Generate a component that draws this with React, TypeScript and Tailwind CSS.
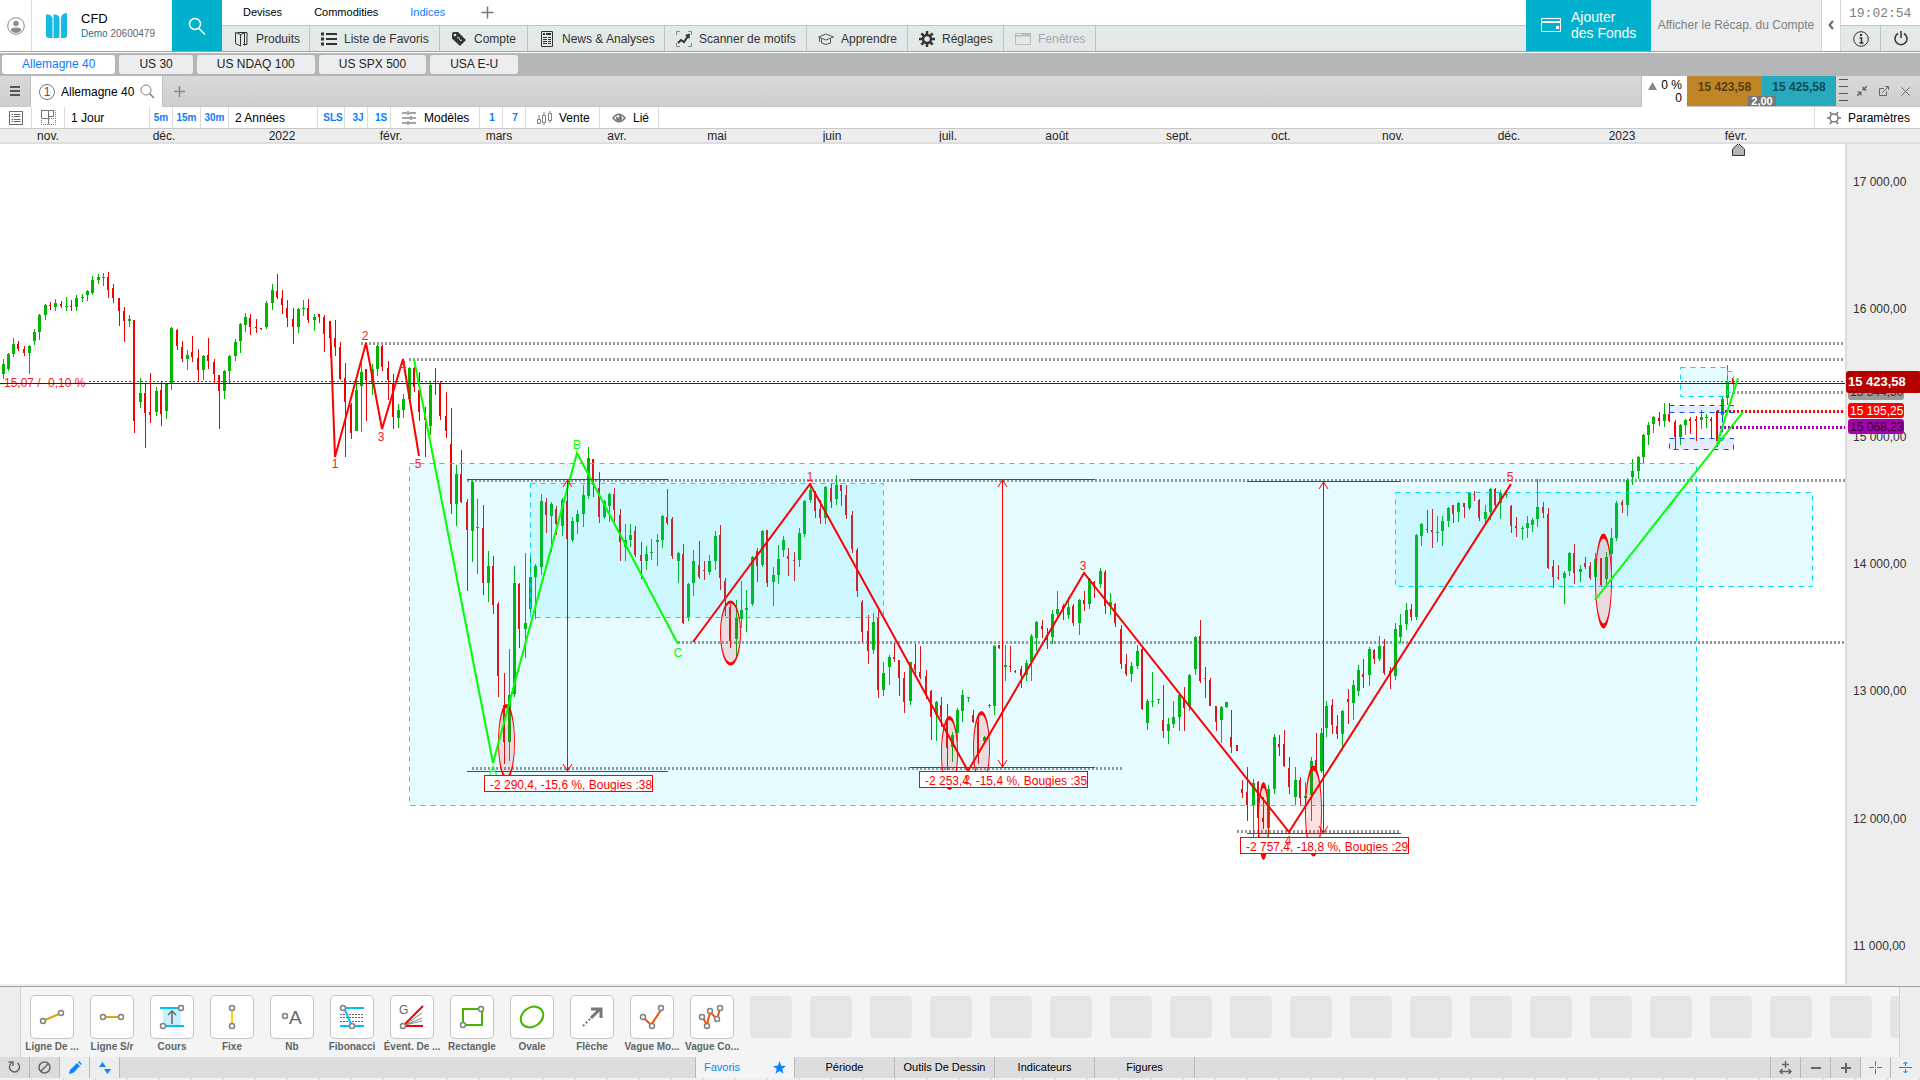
import React from 'react';
import clsx from 'clsx';

type Bar = [x: number, high: number, top: number, bottom: number, low: number];

interface Segment {
  ox: number;
  oy: number;
  up: Bar[];
  down: Bar[];
}

// Daily bars, stored in thirds of a pixel from the origin of each segment
const segments: Segment[] = [
  {
    ox: 0,
    oy: 106,
    up: [
      [10, 328, 342, 372, 387], [26, 309, 312, 357, 363], [40, 264, 282, 312, 321], [88, 286, 288, 309, 372],
      [103, 237, 246, 273, 285], [118, 192, 195, 246, 270], [136, 162, 165, 195, 210], [166, 147, 159, 171, 183],
      [199, 141, 168, 171, 183], [229, 135, 144, 171, 183], [247, 132, 141, 144, 156], [262, 120, 123, 135, 153],
      [277, 78, 90, 129, 135], [295, 72, 81, 90, 102], [310, 69, 81, 84, 108], [388, 195, 207, 213, 231],
      [421, 384, 429, 456, 474], [469, 411, 423, 486, 498], [499, 399, 402, 483, 507], [514, 231, 234, 402, 420],
      [562, 300, 315, 327, 360], [610, 315, 318, 360, 390], [673, 360, 363, 423, 447], [688, 315, 318, 363, 400],
      [706, 267, 276, 318, 333], [721, 219, 222, 273, 309], [736, 189, 201, 225, 246], [799, 153, 159, 231, 237],
      [817, 102, 120, 159, 180], [895, 174, 177, 231, 249], [910, 150, 174, 177, 198], [943, 192, 201, 210, 243],
      [1069, 380, 420, 543, 543], [1084, 340, 366, 408, 546], [1117, 342, 357, 400, 435], [1132, 285, 288, 357, 378],
      [1195, 462, 480, 504, 534], [1210, 432, 447, 480, 504], [1228, 350, 354, 447, 447], [1291, 395, 405, 528, 555],
    ],
    down: [
      [55, 273, 282, 297, 303], [73, 288, 297, 309, 318], [151, 156, 165, 168, 180], [184, 153, 162, 168, 174],
      [214, 150, 168, 171, 183], [325, 66, 81, 120, 144], [340, 102, 115, 144, 159], [358, 144, 144, 183, 228],
      [373, 171, 183, 213, 276], [403, 210, 210, 513, 549], [436, 400, 429, 489, 594], [451, 369, 486, 495, 519],
      [484, 393, 420, 492, 528], [532, 237, 240, 288, 300], [547, 273, 291, 327, 336], [577, 258, 306, 321, 336],
      [595, 297, 324, 360, 396], [625, 264, 315, 333, 357], [643, 327, 336, 372, 399], [658, 375, 375, 423, 537],
      [751, 192, 204, 231, 255], [769, 207, 231, 234, 249], [784, 234, 234, 237, 240], [832, 72, 123, 141, 147],
      [847, 120, 144, 165, 192], [862, 150, 174, 204, 231], [880, 174, 207, 231, 282], [925, 147, 174, 210, 219],
      [958, 192, 192, 201, 219], [973, 195, 201, 252, 306], [991, 213, 213, 265, 320], [1006, 210, 264, 290, 318],
      [1021, 276, 290, 387, 390], [1036, 339, 384, 456, 621], [1054, 460, 465, 549, 567], [1099, 357, 357, 390, 513],
      [1147, 285, 288, 351, 363], [1165, 333, 354, 390, 450], [1180, 372, 400, 501, 537], [1243, 350, 354, 411, 426],
      [1258, 366, 420, 485, 513], [1276, 471, 490, 510, 621], [1306, 354, 400, 402, 435], [1321, 393, 402, 498, 510],
      [1339, 426, 498, 543, 564],
    ],
  },
  {
    ox: 400,
    oy: 196,
    up: [
      [169, 375, 402, 492, 558], [217, 420, 425, 573, 666], [233, 477, 561, 564, 702], [265, 633, 678, 729, 786],
      [343, 678, 729, 1062, 1071], [376, 639, 849, 867, 954], [328, 927, 1065, 1206, 1263], [392, 650, 711, 807, 820],
      [406, 672, 678, 711, 837], [424, 462, 483, 681, 705], [454, 486, 492, 528, 636], [487, 474, 480, 558, 588],
      [517, 531, 543, 600, 606], [532, 510, 522, 546, 582], [550, 435, 465, 522, 561], [565, 321, 354, 468, 477],
      [613, 480, 483, 531, 537], [628, 459, 462, 498, 546], [676, 552, 600, 621, 663], [691, 552, 585, 600, 621],
      [739, 618, 642, 663, 690], [754, 597, 636, 639, 660], [772, 582, 600, 606, 678], [787, 525, 528, 600, 624],
      [835, 636, 639, 663, 729], [865, 729, 732, 832, 843], [880, 630, 663, 729, 768], [928, 645, 663, 696, 705],
      [946, 573, 588, 663, 690], [1009, 780, 834, 897, 957], [1024, 723, 810, 837, 864], [1039, 750, 804, 810, 876],
      [1057, 648, 651, 792, 798], [1087, 570, 573, 675, 681], [1120, 681, 705, 726, 798], [1135, 615, 657, 705, 732],
      [1150, 588, 600, 630, 651], [1198, 564, 579, 660, 681], [1213, 480, 483, 582, 591], [1231, 435, 450, 480, 489],
      [1276, 438, 441, 534, 552], [1309, 405, 435, 477, 495], [1420, 819, 846, 930, 942], [1450, 966, 999, 1050, 1068],
      [1468, 945, 951, 981, 1035],
    ],
    down: [
      [153, 204, 312, 492, 522], [184, 330, 402, 486, 489], [202, 477, 486, 570, 753], [250, 495, 564, 729, 765],
      [279, 648, 678, 795, 822], [295, 786, 792, 1008, 1071], [313, 999, 1095, 1206, 1272], [358, 729, 732, 867, 924],
      [439, 474, 486, 525, 579], [469, 498, 507, 552, 585], [502, 420, 483, 597, 600], [580, 357, 357, 435, 471],
      [598, 396, 444, 530, 549], [643, 444, 462, 510, 546], [661, 507, 525, 606, 663], [706, 558, 573, 645, 651],
      [724, 606, 645, 663, 717], [802, 447, 531, 549, 555], [817, 531, 537, 648, 657], [850, 612, 642, 849, 852],
      [898, 603, 675, 711, 717], [913, 663, 690, 693, 720], [961, 555, 585, 714, 750], [976, 714, 723, 780, 828],
      [991, 792, 800, 903, 924], [1072, 624, 633, 678, 726], [1102, 570, 570, 729, 741], [1165, 624, 648, 657, 708],
      [1183, 636, 660, 663, 723], [1246, 453, 453, 513, 534], [1261, 480, 507, 534, 552], [1294, 432, 444, 486, 504],
      [1324, 435, 435, 453, 498], [1339, 435, 465, 525, 537], [1357, 513, 525, 627, 639], [1372, 624, 630, 753, 771],
      [1387, 780, 786, 876, 906], [1405, 825, 873, 933, 972], [1435, 810, 834, 1050, 1074], [1483, 910, 951, 957, 966],
      [1498, 960, 960, 1014, 1067],
    ],
  },
  {
    ox: 860,
    oy: 316,
    up: [
      [151, 606, 606, 723, 735], [229, 723, 726, 765, 843], [277, 816, 825, 861, 906], [292, 744, 750, 819, 846],
      [307, 690, 705, 753, 786], [325, 711, 711, 714, 726], [388, 732, 735, 738, 744], [373, 828, 831, 843, 850],
      [403, 555, 558, 738, 765], [436, 555, 615, 621, 663], [499, 600, 609, 645, 663], [514, 522, 528, 606, 663],
      [529, 483, 486, 534, 573], [577, 450, 462, 531, 552], [592, 393, 447, 462, 470], [625, 411, 441, 465, 477],
      [658, 417, 420, 489, 525], [688, 354, 357, 432, 447], [721, 324, 333, 372, 384], [751, 399, 426, 438, 465],
      [814, 606, 618, 642, 666], [832, 555, 573, 618, 627], [862, 717, 723, 789, 810], [877, 636, 723, 726, 741],
      [895, 717, 717, 720, 732], [925, 774, 792, 813, 852], [940, 723, 771, 792, 804], [958, 702, 705, 771, 813],
      [988, 642, 645, 738, 753], [1006, 528, 531, 627, 645], [1084, 738, 741, 780, 849], [1099, 726, 726, 741, 744],
      [1180, 957, 969, 1036, 1135], [1225, 975, 987, 1104, 1130], [1243, 822, 831, 987, 1002], [1306, 921, 960, 1011, 1035],
    ],
    down: [
      [133, 636, 654, 726, 759], [166, 552, 612, 630, 648], [181, 558, 636, 651, 657], [199, 630, 648, 705, 717],
      [214, 690, 693, 771, 840], [244, 711, 735, 771, 800], [262, 732, 780, 864, 930], [340, 750, 765, 786, 790],
      [355, 765, 785, 880, 912], [418, 555, 555, 564, 567], [451, 558, 618, 621, 636], [466, 630, 633, 636, 639],
      [484, 618, 627, 648, 684], [547, 480, 498, 507, 534], [562, 504, 525, 540, 567], [610, 432, 438, 450, 480],
      [640, 432, 438, 489, 498], [673, 393, 420, 432, 453], [703, 363, 366, 380, 414], [736, 330, 336, 438, 462],
      [766, 429, 432, 489, 501], [784, 495, 507, 612, 627], [799, 582, 612, 642, 648], [847, 558, 567, 747, 750],
      [910, 675, 780, 813, 834], [973, 681, 715, 744, 813], [1021, 480, 528, 663, 669], [1036, 621, 654, 657, 714],
      [1051, 654, 660, 738, 738], [1069, 738, 738, 786, 813], [1114, 750, 831, 861, 879], [1132, 855, 855, 873, 873],
      [1147, 960, 987, 999, 1014], [1162, 921, 996, 1035, 1083], [1195, 963, 966, 1074, 1130], [1210, 1010, 1074, 1086, 1107],
      [1258, 825, 852, 861, 888], [1273, 810, 852, 918, 921], [1288, 891, 924, 981, 1002],
    ],
  },
  {
    ox: 1220,
    oy: 296,
    up: [
      [256, 1025, 1068, 1074, 1090], [274, 951, 963, 1065, 1143], [304, 864, 879, 993, 999], [319, 783, 798, 864, 891],
      [367, 810, 813, 882, 930], [400, 720, 735, 789, 840], [415, 675, 690, 753, 768], [448, 621, 627, 705, 738],
      [478, 588, 618, 657, 663], [526, 549, 567, 708, 720], [541, 522, 555, 591, 609], [559, 489, 510, 552, 570],
      [589, 282, 285, 531, 540], [604, 249, 252, 288, 318], [652, 228, 276, 279, 306], [667, 228, 243, 273, 318],
      [685, 201, 204, 243, 261], [715, 186, 189, 216, 246], [748, 156, 159, 204, 210], [796, 195, 216, 237, 249],
      [811, 144, 147, 216, 240], [841, 150, 159, 189, 237], [859, 155, 162, 165, 174], [907, 258, 264, 267, 300],
      [922, 228, 249, 264, 294], [937, 234, 240, 255, 276], [952, 117, 201, 237, 261], [1033, 393, 399, 414, 492],
      [1048, 336, 339, 393, 408], [1081, 375, 387, 396, 426], [1126, 340, 357, 411, 426], [1159, 336, 351, 417, 440],
      [1174, 264, 294, 342, 390], [1189, 183, 189, 294, 303], [1222, 114, 120, 195, 228], [1237, 57, 93, 111, 135],
      [1255, 48, 51, 93, 117],
    ],
    down: [
      [241, 1011, 1020, 1074, 1098], [289, 879, 960, 990, 993], [337, 777, 795, 855, 882], [352, 825, 858, 882, 897],
      [385, 747, 777, 786, 852], [430, 657, 702, 711, 744], [463, 627, 630, 657, 672], [493, 597, 618, 699, 705],
      [511, 681, 693, 708, 747], [574, 492, 507, 531, 543], [622, 210, 267, 270, 279], [637, 207, 270, 276, 324],
      [700, 195, 195, 222, 249], [733, 189, 189, 201, 234], [763, 153, 162, 165, 183], [778, 177, 180, 234, 243],
      [826, 144, 147, 195, 210], [874, 195, 198, 258, 279], [889, 231, 258, 264, 291], [970, 186, 201, 219, 234],
      [985, 204, 222, 384, 387], [1000, 360, 378, 411, 444], [1015, 375, 411, 414, 420], [1063, 312, 339, 399, 432],
      [1096, 351, 369, 381, 387], [1111, 366, 378, 414, 420], [1144, 354, 354, 435, 438], [1207, 180, 186, 195, 219],
    ],
  },
  {
    ox: 1560,
    oy: 196,
    up: [
      [250, 282, 285, 351, 369], [265, 246, 255, 285, 315], [280, 228, 231, 252, 279], [313, 189, 222, 243, 261],
      [361, 252, 255, 291, 315], [376, 237, 240, 255, 285], [424, 210, 231, 240, 267], [439, 222, 231, 234, 264],
      [487, 171, 177, 225, 237], [502, 75, 125, 174, 195],
    ],
    down: [
      [298, 216, 234, 243, 258], [328, 189, 222, 243, 246], [346, 240, 246, 291, 328], [391, 231, 237, 243, 282],
      [409, 228, 237, 243, 303], [454, 231, 237, 243, 294], [472, 211, 213, 303, 321], [520, 114, 114, 130, 160],
    ],
  },
];

const Candle = ({ bar, ox, oy, up }: { bar: Bar; ox: number; oy: number; up?: boolean }) => {
  const x = ox + Math.floor(bar[0] / 3);
  const [high, top, bottom, low] = bar.slice(1).map(v => oy + Math.round(v / 3));
  return (
    <g fill={up ? '#00b400' : '#f50000'}>
      <rect x={x} y={high} width={1} height={Math.max(1, low - high)} />
      <rect x={x - 1} y={top} width={up ? 3 : 2} height={Math.max(1, bottom - top)} />
    </g>
  );
};

const months: [string, number][] = [
  ['nov.', 48], ['déc.', 164], ['2022', 282], ['févr.', 391], ['mars', 499], ['avr.', 617],
  ['mai', 717], ['juin', 832], ['juil.', 948], ['août', 1057], ['sept.', 1179], ['oct.', 1281],
  ['nov.', 1393], ['déc.', 1509], ['2023', 1622], ['févr.', 1736],
];

const prices: [string, number][] = [
  ['17 000,00', 42], ['16 000,00', 169], ['15 000,00', 297], ['14 000,00', 424],
  ['13 000,00', 551], ['12 000,00', 679], ['11 000,00', 806],
];

const dotted = [
  { y: 199, x1: 361, x2: 1845, color: '#969696' },
  { y: 215, x1: 409, x2: 1845, color: '#969696' },
  { y: 336, x1: 467, x2: 1845, color: '#969696' },
  { y: 498, x1: 678, x2: 1845, color: '#969696' },
  { y: 624, x1: 472, x2: 1122, color: '#969696' },
  { y: 687, x1: 1237, x2: 1401, color: '#969696' },
  { y: 248, x1: 1733, x2: 1845, color: '#969696' },
  { y: 267, x1: 1717, x2: 1845, color: '#ff0000' },
  { y: 283, x1: 1720, x2: 1845, color: '#aa00b4' },
];

const zones = [
  { x: 409, y: 319, w: 1287, h: 342, blue: false },
  { x: 530, y: 339, w: 353, h: 134, blue: false },
  { x: 1395, y: 348, w: 417, h: 94, blue: false },
  { x: 1680, y: 223, w: 47, h: 29, blue: false },
  { x: 1727, y: 227, w: 6, h: 21, blue: false },
  { x: 1669, y: 261, w: 64, h: 7, blue: true },
  { x: 1669, y: 294, w: 64, h: 11, blue: true },
  { x: 1717, y: 268, w: 5, h: 28, blue: true },
];

const ovals = [
  { x: 730, y: 489, rx: 10, ry: 31, s: 3 },
  { x: 506, y: 598, rx: 8, ry: 36, s: 4 },
  { x: 949, y: 609, rx: 8, ry: 35, s: 4 },
  { x: 981, y: 604, rx: 8, ry: 35, s: 4 },
  { x: 1263, y: 677, rx: 5, ry: 36, s: 6 },
  { x: 1313, y: 667, rx: 8, ry: 43, s: 5 },
  { x: 1603, y: 437, rx: 8, ry: 45, s: 5 },
];

const measures = [
  { x1: 467, x2: 668, top: 335, bottom: 627, x: 567, box: 484, boxY: 631, text: '-2 290,4, -15,6 %, Bougies :38' },
  { x1: 910, x2: 1095, top: 335, bottom: 623, x: 1002, box: 919, boxY: 627, text: '-2 253,4, -15,4 %, Bougies :35' },
  { x1: 1247, x2: 1401, top: 337, bottom: 689, x: 1323, box: 1240, boxY: 693, text: '-2 757,4, -18,8 %, Bougies :29' },
];

const waveLabels: [string, number, number][] = [
  ['1', 335, 324], ['2', 365, 196], ['3', 381, 297], ['4', 403, 226], ['5', 418, 324],
  ['1', 810, 337], ['2', 967, 640], ['3', 1083, 426], ['4', 1288, 701], ['5', 1510, 337],
];

const Chart = () => (
  <svg className="block h-full w-full" fontSize={12}>
    {dotted.map(l => (
      <line key={l.y} x1={l.x1} x2={l.x2} y1={l.y + 0.5} y2={l.y + 0.5} stroke={l.color} strokeWidth={3} strokeDasharray="2 2" />
    ))}

    <g shapeRendering="crispEdges">
      {segments.map(s => (
        <g key={s.ox}>
          {s.up.map(b => <Candle key={b[0]} bar={b} ox={s.ox} oy={s.oy} up />)}
          {s.down.map(b => <Candle key={b[0]} bar={b} ox={s.ox} oy={s.oy} />)}
        </g>
      ))}
    </g>

    {zones.map(z => (
      <rect
        key={`${z.x}-${z.y}`}
        x={z.x + 0.5}
        y={z.y + 0.5}
        width={z.w}
        height={z.h}
        fill={z.blue ? '#0040ff' : '#00dcff'}
        fillOpacity={0.1}
        stroke={z.blue ? '#0055ff' : '#00d8ff'}
        strokeDasharray="5 5"
      />
    ))}

    {/* Cours actuel */}
    <line x1={89} x2={1845} y1={237.5} y2={237.5} stroke="#e60000" strokeDasharray="2 2" />
    <line x1={0} x2={1845} y1={239.5} y2={239.5} stroke="#282828" />
    <text x={0} y={243} fill="#ff2020">-15,07 / -0,10 %</text>
    <line x1={0} x2={89} y1={239.5} y2={239.5} stroke="#282828" />

    {ovals.map(o => (
      <g key={o.x} transform={`translate(${o.x + 0.5} ${o.y}) scale(${o.rx / o.ry} 1)`}>
        <circle r={o.ry} fill="#ff0000" fillOpacity={0.12} stroke="#ff0000" strokeWidth={o.s} />
      </g>
    ))}

    {/* Vagues */}
    <g fill="none" strokeWidth={2}>
      <path d="M330 177L335 313L366 199L382 285L403 215L419 312" stroke="#ff0000" />
      <path d="M414 215L493 619L577 309L678 500" stroke="#00ff00" />
      <path d="M693 498L810 340L968 627L1084 429L1289 688L1511 340" stroke="#ff0000" />
      <path d="M1595 456L1743 268M1717 300L1738 234" stroke="#00ff00" />
    </g>

    {measures.map(m => (
      <g key={m.x} stroke="#ff0000" fill="none">
        <path d={`M${m.x1} ${m.top + 0.5}H${m.x2}M${m.x1} ${m.bottom + 0.5}H${m.x2}M${m.x + 0.5} ${m.top}V${m.bottom}`} />
        <path d={`M${m.x - 4} ${m.top + 8}L${m.x + 0.5} ${m.top + 1}L${m.x + 5} ${m.top + 8}M${m.x - 4} ${m.bottom - 7}L${m.x + 0.5} ${m.bottom}L${m.x + 5} ${m.bottom - 7}`} />
        <rect x={m.box + 0.5} y={m.boxY + 0.5} width={168} height={16} fill="#ffffff" />
        <text x={m.box + 6} y={m.boxY + 14} fill="#ff0000" stroke="none">{m.text}</text>
      </g>
    ))}

    <g textAnchor="middle" fill="#ff2020">
      {waveLabels.map(([t, x, y]) => (
        <text key={`${t}-${x}`} x={x} y={y}>{t}</text>
      ))}
    </g>
    <g textAnchor="middle" fill="#00ff00">
      <text x={493} y={631}>A</text>
      <text x={577} y={305}>B</text>
      <text x={678} y={513}>C</text>
    </g>
    <path d="M1732.5 11.5V5L1738.5 -0.5L1744.5 5V11.5Z" fill="#b4b4b4" stroke="#333" />
  </svg>
);

/* ---------- Icons ---------- */

const Icon = ({ w = 16, h = 16, className, children }: { w?: number; h?: number; className?: string; children: React.ReactNode }) => (
  <svg width={w} height={h} viewBox={`0 0 ${w} ${h}`} fill="none" stroke="currentColor" className={clsx('shrink-0', className)} aria-hidden="true">
    {children}
  </svg>
);

const menu = [
  { label: 'Produits', width: 'w-[88px]', icon: <Icon><path d="M4.500 1.500H14V13.500H10" /><path d="M2.500 1.500L7.500 3.500V15L2.500 12.500ZM7.500 3.500L11.500 2V14.500" /></Icon> },
  { label: 'Liste de Favoris', width: 'w-[130px]', icon: <Icon><path d="M5 3H16M5 8H16M5 13H16" strokeWidth="2" /><path d="M0 3H3M0 8H3M0 13H3" strokeWidth="3" /></Icon> },
  { label: 'Compte', width: 'w-[88px]', icon: <Icon><path d="M1 2.500Q1 1 3 1H7L15 9L9 15L1 7.500Z" fill="#333" stroke="none" /><path d="M6 7Q8 5 8.500 8T11 9" stroke="#e3e8e8" /><circle cx="4" cy="4" r="1.300" fill="#e3e8e8" stroke="none" /></Icon> },
  { label: 'News & Analyses', width: 'w-[137px]', icon: <Icon><path d="M2.500 0.500H13.500V15.500H2.500Z" /><path d="M4 3H6M7 3H12" strokeWidth="2" /><path d="M4 6.500H8M9 6.500H12M4 8.500H8M4 10.500H8M4 12.500H8M9 8.500H12M9 10.500H12M9 12.500H12" /></Icon> },
  { label: 'Scanner de motifs', width: 'w-[142px]', icon: <Icon><path d="M0.500 4V0.500H4M12 0.500H15.500V4M0.500 12V15.500H4M12 15.500H15.500V12" stroke="#888" /><path d="M2 12L5 9L8 11L12 5" strokeWidth="2" /><path d="M9 4L14 2.500L13.500 8Z" fill="#333" stroke="none" /></Icon> },
  { label: 'Apprendre', width: 'w-[101px]', icon: <Icon><path d="M0.500 6L8 3L15.500 6L8 9ZM3.500 8V12Q8 15 12.500 12V8M1.500 7V11" stroke="#555" /></Icon> },
  { label: 'Réglages', width: 'w-[96px]', icon: <Icon><circle cx="8" cy="8" r="4" strokeWidth="2.500" /><path d="M8 0V3M8 13V16M0 8H3M13 8H16M2.300 2.300L4.500 4.500M11.500 11.500L13.700 13.700M2.300 13.700L4.500 11.500M11.500 4.500L13.700 2.300" strokeWidth="2.500" /></Icon> },
  { label: 'Fenêtres', width: 'w-[92px]', disabled: true, icon: <Icon><path d="M0.500 2.500H15.500V13.500H0.500Z" stroke="#bbb" /><path d="M0.500 4.500H8V2.500H15V5H0.500Z" fill="#bbb" stroke="#bbb" /></Icon> },
];

const Header = () => (
  <header className="mb-px flex h-[52px] shrink-0 border-b border-[#9a9fb4] bg-white">
    <button aria-label="Profil" className="flex w-8 items-center justify-center border-r border-[#dcdcdc] text-[#8c8c8c]">
      <Icon w={18} h={18}>
        <circle cx="9" cy="9" r="8.300" />
        <circle cx="9" cy="6.500" r="2.700" fill="currentColor" stroke="none" />
        <path d="M3.500 13Q4 10.500 9 10.500T14.500 13Q12.500 16 9 16T3.500 13Z" fill="currentColor" stroke="none" />
      </Icon>
    </button>
    <div className="flex w-[140px] items-center gap-3.5 pl-3.5">
      <svg width="21" height="25" viewBox="0 0 21 25" fill="#14bbe0" aria-hidden="true">
        <path d="M0 1.500C4 1.500 6.500 2.500 6.500 6V25H3Q0 25 0 22ZM7.500 1.500C11 1.500 13.500 2.500 13.500 6V25H7.500ZM21 0V22Q21 25 18 25H15V6C15 2 17 0.500 21 0Z" />
      </svg>
      <div className="pb-0.5">
        <p className="text-[13px] leading-[18px] text-black">CFD</p>
        <p className="text-[10px] leading-3 text-[#666]"><span className="text-[#007d96]">Demo</span> 20600479</p>
      </div>
    </div>
    <button aria-label="Rechercher" className="flex w-[50px] items-center justify-center bg-[#00b0cd] text-white">
      <Icon w={18} h={18}>
        <circle cx="7" cy="7" r="5.500" strokeWidth="1.500" />
        <path d="M11 11.500L17 17.500" strokeWidth="1.500" />
      </Icon>
    </button>
    <div className="flex min-w-0 flex-1 flex-col">
      <nav className="flex h-[25px] items-center gap-8 pl-[21px] text-[11px] text-black">
        <a href="#devises">Devises</a>
        <a href="#commodities">Commodities</a>
        <a href="#indices" className="text-[#0a7cff]">Indices</a>
        <button aria-label="Ajouter un espace" className="ml-1 text-[#777]"><Icon w={13} h={13}><path d="M6.500 0.500V12.500M0.500 6.500H12.500" strokeWidth="1.500" /></Icon></button>
      </nav>
      <div className="flex flex-1 overflow-hidden border-t border-[#bfc4c4] bg-[#e3e8e8]">
        {menu.map(m => (
          <button
            key={m.label}
            disabled={m.disabled}
            className={clsx('flex shrink-0 items-center gap-[7px] border-r border-[#bfc4c4] pl-[11px] text-xs whitespace-nowrap', m.width, m.disabled ? 'text-[#a8a8a8]' : 'text-[#333]')}
          >
            {m.icon}
            {m.label}
          </button>
        ))}
      </div>
    </div>
    <button className="flex w-[125px] items-center gap-[10px] bg-[#00b0cd] pb-0.5 pl-[15px] text-left text-sm leading-4 text-white">
      <Icon w={20} h={14}><path d="M0.500 0.500H19.500V13.500H0.500Z" /><path d="M0 4H20" strokeWidth="2" /><path d="M15 8H18V11H15Z" fill="#fff" stroke="none" /></Icon>
      <span>Ajouter<br />des Fonds</span>
    </button>
    <button className="w-[171px] border-r border-[#d4d4d4] bg-[#ecedef] pb-0.5 text-xs whitespace-nowrap text-[#808080]">Afficher le Récap. du Compte</button>
    <button aria-label="Replier" className="flex w-[19px] items-center justify-center border-r border-[#d4d4d4] pb-0.5 text-[#666]">
      <Icon w={6} h={10}><path d="M5 1L1.500 5L5 9" strokeWidth="2" /></Icon>
    </button>
    <div className="flex w-[79px] flex-col">
      <time className="h-[25px] pl-2 font-['Liberation_Mono',monospace] text-[13px] leading-[27px] text-[#808080]">19:02:54</time>
      <div className="flex flex-1 border-t border-[#bfc4c4] bg-[#e3e8e8] text-[#333]">
        <button aria-label="Informations" className="flex flex-1 items-center justify-center border-r border-[#bfc4c4]">
          <Icon><circle cx="8" cy="8" r="7.300" /><path d="M6.500 7H8.500V12M6.500 12H10.500" strokeWidth="1.500" /><path d="M7 4H9" strokeWidth="2" /></Icon>
        </button>
        <button aria-label="Déconnexion" className="flex flex-1 items-center justify-center">
          <Icon w={14} h={15}><path d="M4 2.500A6 6 0 1 0 10 2.500M7 0V7" strokeWidth="1.500" /></Icon>
        </button>
      </div>
    </div>
  </header>
);

const instruments = ['Allemagne 40', 'US 30', 'US NDAQ 100', 'US SPX 500', 'USA E-U'];

const InstrumentTabs = () => (
  <nav className="flex h-[23px] shrink-0 gap-1 bg-[#b5b6b8] pt-0.5 pl-0.5 text-xs leading-[18px]">
    {instruments.map((name, i) => (
      <button key={name} className={clsx('h-[19px] rounded-[3px] px-5 pb-px', i === 0 ? 'bg-white text-[#0a7cff]' : 'bg-[#ecedef] text-[#222]')}>{name}</button>
    ))}
  </nav>
);

const WindowBar = () => (
  <div className="flex h-[31px] shrink-0 border-b border-[#c8c8c8] bg-linear-to-b from-[#d9d9d9] to-[#cecece] text-xs">
    <button aria-label="Menu" className="flex w-[31px] items-center justify-center border-r border-[#c0c0c0] text-[#555]">
      <Icon w={10} h={12}><path d="M0 2H10M0 6H10M0 10H10" strokeWidth="2" /></Icon>
    </button>
    <div className="-mb-px flex w-[132px] items-center gap-1.5 border-r border-[#c0c0c0] bg-white pl-2">
      <span className="flex size-4 items-center justify-center rounded-full border border-[#777] text-[#555]">1</span>
      <span className="whitespace-nowrap text-black">Allemagne 40</span>
      <button aria-label="Rechercher un produit" className="text-[#808080]">
        <Icon w={15} h={15}><circle cx="6" cy="6" r="5" /><path d="M9.500 9.500L14 14" strokeWidth="1.500" /></Icon>
      </button>
    </div>
    <button aria-label="Nouvel onglet" className="flex w-8 items-center justify-center text-[#888]">
      <Icon w={11} h={11}><path d="M5.500 0V11M0 5.500H11" strokeWidth="1.500" /></Icon>
    </button>
    <div className="ml-auto flex">
      <div className="-mb-px w-[46px] border-l border-[#c0c0c0] bg-white pr-[5px] text-right leading-[13px] text-black">
        <p className="flex items-center justify-end gap-1 pt-[3px] whitespace-nowrap">
          <svg width="9" height="8" aria-hidden="true"><path d="M0 8L4.500 0L9 8Z" fill="#888" /></svg>0 %
        </p>
        <p>0</p>
      </div>
      <div className="relative flex font-bold">
        <button className="w-[75px] bg-[#c08526] pb-2 text-[#57400f]">15 423,58</button>
        <button className="w-[74px] bg-[#27a9be] pb-2 text-[#124c56]">15 425,58</button>
        <span className="absolute bottom-0 left-[61px] h-[10px] w-7 rounded-t-[1px] bg-[#777] text-center text-[11px] leading-[11px] text-white">2,00</span>
      </div>
      <div className="flex items-center gap-3 pr-[10px] text-[#666]">
        <Icon w={12} h={26} className="-mr-[3px]"><path d="M3 1.500H12M3 8.500H12M3 15.500H12M3 22.500H12" stroke="#555" /></Icon>
        <button aria-label="Réduire"><Icon w={10} h={10}><path d="M0 10L3 7M10 0L7 3" strokeWidth="1.500" /><path d="M0 5.500H4.500V10ZM10 4.500H5.500V0Z" fill="currentColor" stroke="none" /></Icon></button>
        <button aria-label="Détacher"><Icon w={10} h={10}><path d="M5 2.500H0.500V9.500H7.500V5.500M3.500 6.500L9 1M6 0.500H9.500V4" /></Icon></button>
        <button aria-label="Fermer"><Icon w={9} h={9}><path d="M0.500 0.500L8.500 8.500M8.500 0.500L0.500 8.500" /></Icon></button>
      </div>
    </div>
  </div>
);

const cell = 'flex items-center border-r border-[#dcdcdc]';
const quick = 'justify-center text-[10px] font-bold text-[#0a7cff]';

const ChartToolbar = () => (
  <div className="flex h-[22px] shrink-0 border-b border-[#c8c8c8] bg-white text-xs text-black">
    <button aria-label="Liste" className={clsx(cell, 'w-8 justify-center text-[#666]')}>
      <Icon w={14} h={14}><path d="M0.500 0.500H13.500V13.500H0.500Z" /><path d="M2.500 3.500H4M5 3.500H11.500M2.500 5.500H4M5 5.500H11.500M2.500 8.500H4M5 8.500H11.500M2.500 10.500H4M5 10.500H11.500" /></Icon>
    </button>
    <button aria-label="Disposition" className={clsx(cell, 'w-[33px] justify-center text-[#777]')}>
      <Icon w={15} h={15}><path d="M0.500 0.500H7.500V14.500M0.500 0V8.500H7.500M7.500 6.500H12.500V0.500H7.500" /><path d="M8 0.500H14.500V14.500H0.500V9M8 8.500H14" strokeDasharray="1 1" /></Icon>
    </button>
    <button className={clsx(cell, 'w-[85px] pl-1.5')}>1 Jour</button>
    <button className={clsx(cell, quick, 'w-[23px]')}>5m</button>
    <button className={clsx(cell, quick, 'w-7')}>15m</button>
    <button className={clsx(cell, quick, 'w-7')}>30m</button>
    <button className={clsx(cell, 'w-[89px] pl-1.5')}>2 Années</button>
    <button className={clsx(cell, quick, 'w-[27px] pl-1')}>SLS</button>
    <button className={clsx(cell, quick, 'w-[23px] pl-1')}>3J</button>
    <button className={clsx(cell, quick, 'w-[23px] pl-1')}>1S</button>
    <button className={clsx(cell, 'w-[89px] gap-2 pl-[11px]')}>
      <Icon w={14} h={14} className="text-[#888]"><path d="M0 2H5M7 2H14M0 7H8M10 7H14M0 12H5M7 12H14" strokeWidth="1.500" /><path d="M6 0V4M9 5V9M6 10V14" strokeWidth="1.500" /></Icon>
      Modèles
    </button>
    <button className={clsx(cell, quick, 'w-[23px] pl-0.5')}>1</button>
    <button className={clsx(cell, quick, 'w-[23px] pl-0.5')}>7</button>
    <button className={clsx(cell, 'w-[74px] gap-[7px] pl-[11px]')}>
      <Icon w={15} h={14} className="text-[#808080]"><path d="M0.500 8.500H3.500V12.500H0.500ZM2 4V8M5.500 4.500H8.500V11.500H5.500ZM7 1V4M7 12V14M11.500 2.500H14.500V9.500H11.500ZM13 0V2M13 10V12" /></Icon>
      Vente
    </button>
    <button className={clsx(cell, 'w-[59px] gap-[7px] pl-3')}>
      <Icon w={14} h={10} className="text-[#777]"><path d="M1 5Q7 -2.500 13 5Q7 12.500 1 5Z" strokeWidth="1.500" /><circle cx="7" cy="5" r="3" fill="currentColor" stroke="none" /><circle cx="6" cy="3.500" r="1.200" fill="#fff" stroke="none" /></Icon>
      Lié
    </button>
    <button className="ml-auto flex items-center gap-[7px] border-l border-[#dcdcdc] pr-[10px] pl-3">
      <Icon w={14} h={14} className="text-[#777]"><circle cx="7" cy="7" r="4" strokeWidth="1.500" /><path d="M0 7H3M11 7H14M3 1L5 4M11 1L9 4M3 13L5 10M11 13L9 10" strokeWidth="1.500" /></Icon>
      Paramètres
    </button>
  </div>
);

const TimeAxis = () => (
  <div className="h-[15px] shrink-0 border-b-2 border-[#dedede] bg-[#ededed]">
    <svg className="block h-full w-full" fontSize={12} textAnchor="middle" fill="#222">
      {months.map(([t, x]) => <text key={x} x={x} y={11}>{t}</text>)}
    </svg>
  </div>
);

const PriceAxis = () => (
  <aside className="relative w-[75px] shrink-0 border-l-2 border-[#dcdcdc] bg-[#ededed] text-xs">
    <svg className="block h-full w-full" fill="#333">
      {prices.map(([t, y]) => <text key={t} x={6} y={y}>{t}</text>)}
    </svg>
    <span className="absolute top-[241px] left-px h-[15px] w-14 rounded-[3px] bg-[#999] pl-0.5 leading-[15px] text-[#333]">15 344,50</span>
    <span className="absolute top-[259px] left-px h-[15px] w-14 rounded-[3px] bg-[#ff0000] pl-0.5 leading-[17px] text-white">15 195,25</span>
    <span className="absolute top-[275px] left-px h-[15px] w-14 rounded-[3px] bg-[#a800ac] pl-0.5 leading-[17px] text-[#2c002c]">15 068,23</span>
    <span className="absolute top-[227px] -left-px h-[22px] w-[75px] rounded-[3px] bg-[#b40000] pl-0.5 text-[13px] leading-[22px] font-bold text-white">15 423,58</span>
  </aside>
);

/* ---------- Drawing tools ---------- */

const Node = ({ x, y }: { x: number; y: number }) => <circle cx={x} cy={y} r={2.5} fill="#fff" stroke="#808080" strokeWidth={1.5} />;

const tools = [
  { label: 'Ligne De ...', art: <><path d="M14 24L28 18" stroke="#dca500" strokeWidth="2" /><Node x={12} y={25} /><Node x={30} y={17} /></> },
  { label: 'Ligne S/r', art: <><path d="M15 21H27" stroke="#dca500" strokeWidth="2" /><Node x={12} y={21} /><Node x={30} y={21} /></> },
  { label: 'Cours', art: <><path d="M12 12H30V30H12Z" fill="#c8f0ff" stroke="none" /><path d="M9 12H28M15 30H33" stroke="#00bfff" strokeWidth="2" /><path d="M21 28V15M17 19L21 15L25 19" stroke="#666" strokeWidth="1.500" /><Node x={30} y={12} /><Node x={12} y={30} /></> },
  { label: 'Fixe', art: <><path d="M21 15V27" stroke="#ffd200" strokeWidth="2" /><Node x={21} y={12} /><Node x={21} y={30} /></> },
  { label: 'Nb', art: <><Node x={14} y={20} /><text x={18} y={28} fontSize={19} fill="#666" stroke="none">A</text></> },
  { label: 'Fibonacci', art: <><path d="M15 12H33M9 30H33" stroke="#00bfff" strokeWidth="2" /><path d="M9 18.500H33M9 21.500H33M9 25.500H33" stroke="#666" strokeDasharray="2 1" /><path d="M14 14L20 28" stroke="#00bfff" strokeWidth="2" /><Node x={12} y={12} /><Node x={21} y={30} /></> },
  { label: 'Évent. De ...', art: <><text x={8} y={18} fontSize={12} fill="#666" stroke="none">G</text><path d="M14 29L31 17M14 29L31 22M14 29L31 25" stroke="#888" /><path d="M14 28L32 10M15 30H32" stroke="#ff0000" strokeWidth="2" /><Node x={12} y={30} /></> },
  { label: 'Rectangle', art: <><path d="M12 13H31V29H12Z" stroke="#46b400" strokeWidth="2" /><Node x={30} y={13} /><Node x={12} y={29} /></> },
  { label: 'Ovale', art: <ellipse cx="21" cy="21" rx="12" ry="9.500" transform="rotate(-35 21 21)" stroke="#46b400" strokeWidth="2" /> },
  { label: 'Flèche', art: <><path d="M12 30L22 20" stroke="#777" strokeWidth="2" strokeDasharray="2 2" /><path d="M20 22L29 13M20 13H30V22" stroke="#777" strokeWidth="3" /></> },
  { label: 'Vague Mo...', art: <><path d="M13 22L20 29L30 14" stroke="#ff4b00" strokeWidth="2" /><Node x={12} y={21} /><Node x={21} y={30} /><Node x={30} y={12} /></> },
  { label: 'Vague Co...', art: <><path d="M12 22L16 29L19 16L26 23L29 13" stroke="#ff4b00" strokeWidth="2" /><Node x={11} y={21} /><Node x={16} y={30} /><Node x={19} y={15} /><Node x={26} y={23} /><Node x={29} y={12} /></> },
];

const ToolPanel = () => (
  <section className="shrink-0 bg-[#ededed] pt-0.5">
    <div className="flex h-[71px] border-t border-[#a0a0a0]">
      <div className="w-[21px] border-r border-[#d4d4d4]" />
      <div className="flex flex-1 overflow-hidden border-r border-[#d4d4d4] bg-[#f4f4f4] pt-2 pl-px">
        {tools.map(t => (
          <button key={t.label} className="flex w-[60px] shrink-0 flex-col items-center text-[10px] font-bold whitespace-nowrap text-[#5c6666]">
            <span className="flex size-11 items-center justify-center rounded-[5px] border border-[#c4c4c4] bg-white">
              <svg width="42" height="42" fill="none" fontWeight="normal" aria-hidden="true">{t.art}</svg>
            </span>
            <span className="leading-4">{t.label}</span>
          </button>
        ))}
        {Array.from({ length: 20 }, (_, i) => (
          <span key={i} className="mt-px mr-[10px] ml-2 size-[42px] shrink-0 rounded-[4px] bg-[#e5e5e5]" />
        ))}
      </div>
      <div className="w-5" />
    </div>
  </section>
);

const footCell = 'flex w-[30px] items-center justify-center border-r border-[#b8b8b8]';

const Footer = () => (
  <footer className="shrink-0">
    <div className="flex h-[21px] bg-[#dbdcde] text-[11px] text-black">
      <button aria-label="Rétablir" className={clsx(footCell, 'text-[#666]')}>
        <Icon w={13} h={13}><path d="M9.500 2A5 5 0 1 1 3.500 2" strokeWidth="1.500" /><path d="M0.500 1H5V5" strokeWidth="1.500" /></Icon>
      </button>
      <button aria-label="Masquer" className={clsx(footCell, 'text-[#666]')}>
        <Icon w={13} h={13}><circle cx="6.500" cy="6.500" r="5.500" strokeWidth="1.500" /><path d="M3 10L10 3" strokeWidth="1.500" /></Icon>
      </button>
      <button aria-label="Dessiner" className={clsx(footCell, 'bg-[#ecedef] text-[#0a84ff]')}>
        <Icon w={14} h={14}><path d="M1 13L2 9L9 2L12 5L5 12ZM10 1L11 0L14 3L13 4Z" fill="currentColor" stroke="none" /></Icon>
      </button>
      <button aria-label="Trier" className={clsx(footCell, 'bg-[#ecedef] text-[#0a84ff]')}>
        <Icon w={12} h={12}><path d="M0 5H7L3.500 0ZM5 7H12L8.500 12Z" fill="currentColor" stroke="none" /></Icon>
      </button>
      <nav className="mx-auto flex">
        <button className="flex w-[100px] items-center justify-between border-r border-l border-[#b8b8b8] bg-[#f4f4f4] pr-2 pl-2 text-[#0a84ff]">
          Favoris
          <Icon w={13} h={13}><path d="M6.500 0L8.200 4.700L13 4.900L9.200 7.900L10.500 12.700L6.500 10L2.500 12.700L3.800 7.900L0 4.900L4.800 4.700Z" fill="currentColor" stroke="none" /></Icon>
        </button>
        {['Période', 'Outils De Dessin', 'Indicateurs', 'Figures'].map(t => (
          <button key={t} className="w-[100px] border-r border-[#b8b8b8]">{t}</button>
        ))}
      </nav>
      <div className="flex border-l border-[#b8b8b8] text-[#666]">
        <button aria-label="Ajuster" className={footCell}>
          <Icon w={13} h={13}><path d="M6.500 0V7M3 3.500H10M1 10.500H12M3.500 8L1 10.500L3.500 13M9.500 8L12 10.500L9.500 13" strokeWidth="1.500" /></Icon>
        </button>
        <button aria-label="Zoom arrière" className={footCell}><Icon w={10} h={10}><path d="M0 5H10" strokeWidth="2" /></Icon></button>
        <button aria-label="Zoom avant" className={footCell}><Icon w={10} h={10}><path d="M0 5H10M5 0V10" strokeWidth="2" /></Icon></button>
        <button aria-label="Réticule" className={clsx(footCell, 'bg-[#ecedef] text-[#0a84ff]')}>
          <Icon w={13} h={13}><path d="M6.500 0V5M6.500 8V13M0 6.500H5M8 6.500H13M6 6.500H7" /></Icon>
        </button>
        <button aria-label="Ligne de prix" className="flex w-[29px] items-center justify-center bg-[#ecedef] text-[#0a84ff]">
          <Icon w={13} h={13}><path d="M0 6.500H13M6.500 1V5M6.500 8V12M4.500 3L6.500 1L8.500 3M4.500 10L6.500 12L8.500 10" /></Icon>
        </button>
      </div>
    </div>
    <div className="h-0.5 bg-[repeating-linear-gradient(90deg,#f0f0f0_0_31px,#d8d8d8_31px_32px)]" />
  </footer>
);

const App: React.FC = () => (
  <div className="flex h-screen flex-col overflow-hidden bg-white font-['Liberation_Sans',Arial,sans-serif]">
    <Header />
    <InstrumentTabs />
    <WindowBar />
    <ChartToolbar />
    <TimeAxis />
    <main className="flex min-h-0 flex-1">
      <div className="min-w-0 flex-1 overflow-hidden">
        <Chart />
      </div>
      <PriceAxis />
    </main>
    <ToolPanel />
    <Footer />
  </div>
);

export default App;
